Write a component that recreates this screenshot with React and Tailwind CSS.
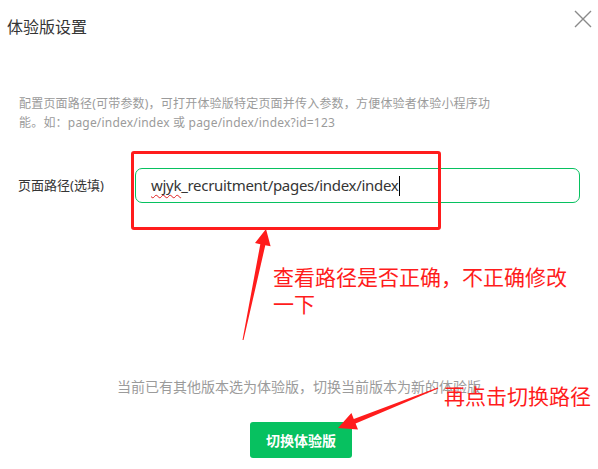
export default function App() {
  const font = { fontFamily: '"Noto Sans", "Noto Sans CJK SC", sans-serif' };
  return (
    <div className="relative w-[598px] h-[469px] bg-white overflow-hidden" style={font}>

      {/* Header */}
      <div className="flex items-start justify-between pl-[7px] pr-[5px] pt-[16px]">
        <h2 className="text-[16px] leading-[22px] text-[#353535]">体验版设置</h2>
        <svg width="20" height="20" viewBox="0 0 20 20" className="-mt-[7px]">
          <path d="M2 2 L18 18 M18 2 L2 18" stroke="#8a8a8a" strokeWidth="1.4" fill="none" />
        </svg>
      </div>

      {/* Description */}
      <div className="mt-[56px] pl-[19px] text-[12px] leading-[19px] text-[#9b9b9b] tracking-[0.2px]">
        <p>配置页面路径(可带参数)，可打开体验版特定页面并传入参数，方便体验者体验小程序功</p>
        <p>能。如：page/index/index 或 page/index/index?id=123</p>
      </div>

      {/* Form row */}
      <div className="mt-[36px] flex items-center pl-[18px] pr-[18px]">
        <label className="w-[117px] text-[13px] text-[#353535]">页面路径(选填)</label>
        <div className="flex-1 h-[35px] border border-[#07c160] rounded-[7px] flex items-center pl-[15px]">
          <span className="text-[15px] text-[#353535] tracking-[-0.3px]">
            <span className="underline decoration-wavy decoration-[#e02020] decoration-1 underline-offset-[3px]">wjyk</span>
            _recruitment/pages/index/index
          </span>
          <span className="w-px h-[20px] bg-black ml-[1px]" />
        </div>
      </div>

      {/* Footer */}
      <div className="mt-[174px] flex flex-col items-center">
        <p className="text-[14px] leading-[20px] text-[#9b9b9b]">当前已有其他版本选为体验版，切换当前版本为新的体验版</p>
        <button className="mt-[25px] ml-[4px] w-[102px] h-[36px] rounded-[3px] bg-[#07c160] text-white text-[14px] font-bold">
          切换体验版
        </button>
      </div>

      {/* Annotations */}
      <div className="absolute left-[131px] top-[151px] w-[310px] h-[79px] border-[3px] border-[#ff1c1c] rounded-[3px]" />
      <div className="absolute left-[273px] top-[264px] text-[21px] leading-[27px] text-[#ff1c1c]">
        <p>查看路径是否正确，不正确修改</p>
        <p>一下</p>
      </div>
      <p className="absolute left-[444px] top-[383px] text-[21px] leading-[27px] text-[#ff1c1c]">再点击切换路径</p>
      <svg className="absolute left-0 top-0" width="598" height="469" viewBox="0 0 598 469">
        <polygon
          fill="#ff1c1c"
          points="242.5,339.9 260.3,244.2 255,243.1 266,229 270.6,246.3 265.3,245.2 243.5,340.1"
        />
        <polygon
          fill="#ff1c1c"
          points="437.8,387.5 353.8,419.0 351.4,413.0 338,428 358.0,429.6 355.6,423.6 438.2,388.5"
        />
      </svg>
    </div>
  );
}
